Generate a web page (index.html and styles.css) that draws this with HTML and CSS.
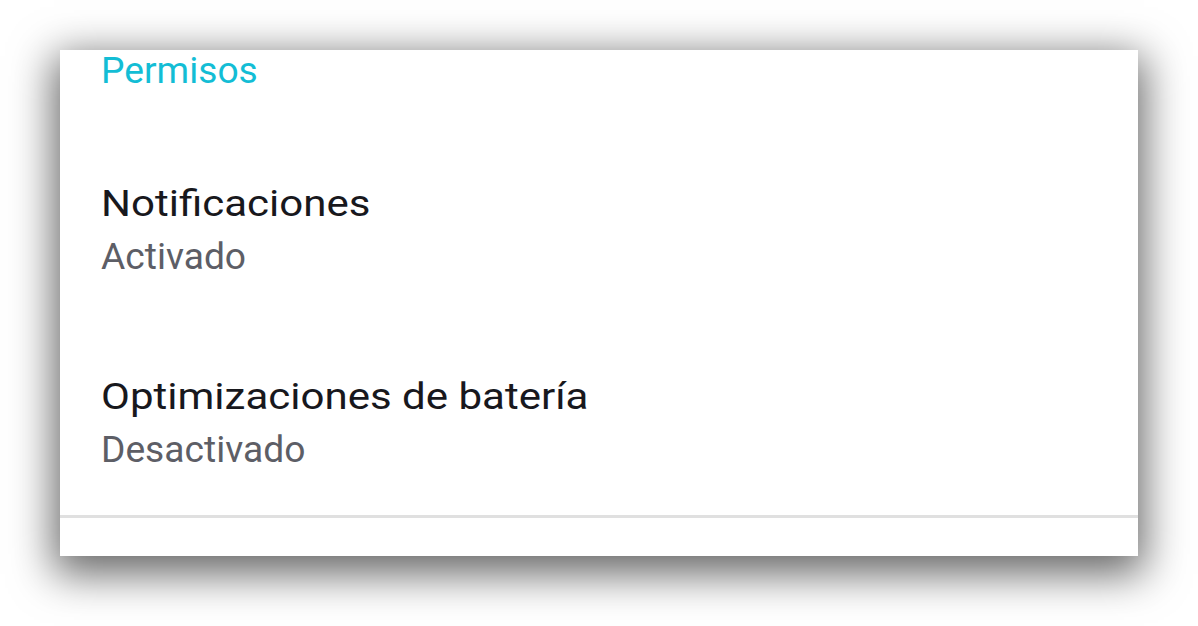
FILE: index.html
```html
<!DOCTYPE html>
<html lang="es">
<head>
<meta charset="utf-8">
<title>Permisos</title>
<link rel="stylesheet" href="styles.css">
</head>
<body>
<div class="stage">
  <div class="card">
    <div class="section-title">Permisos</div>
    <div class="item item-first">
      <div class="item-title"><span class="wide">Notificaciones</span></div>
      <div class="item-sub">Activado</div>
    </div>
    <div class="item">
      <div class="item-title"><span class="wide">Optimizaciones de batería</span></div>
      <div class="item-sub">Desactivado</div>
    </div>
    <div class="divider"></div>
  </div>
</div>
</body>
</html>
```
FILE: styles.css
```css
html, body {
  margin: 0;
  padding: 0;
  background: #ffffff;
}
body {
  width: 1198px;
  height: 626px;
  overflow: hidden;
  font-family: Roboto, "Noto Sans", "Liberation Sans", sans-serif;
}
.stage {
  padding: 50px 60px 0 60px;
}
.card {
  width: 1078px;
  height: 506px;
  background: #ffffff;
  box-shadow: 0 12px 40px 6px rgba(0, 0, 0, 0.6);
  overflow: hidden;
  padding-left: 41px;
  box-sizing: border-box;
}
.section-title {
  font-size: 37.2px;
  line-height: 40px;
  color: #13bdd5;
}
.item-first {
  margin-top: 93.3px;
}
.item + .item {
  margin-top: 100px;
}
.item-title {
  font-size: 37.2px;
  line-height: 40px;
  color: #18181d;
  white-space: nowrap;
}
.wide {
  display: inline-block;
  transform: scaleX(1.13);
  transform-origin: left center;
}
.item-sub {
  font-size: 37.2px;
  line-height: 40px;
  color: #5d5e66;
  margin-top: 12.7px;
}
.divider {
  height: 3px;
  background: #e0e0e0;
  margin-top: 46.5px;
  margin-left: -41px;
}
```
